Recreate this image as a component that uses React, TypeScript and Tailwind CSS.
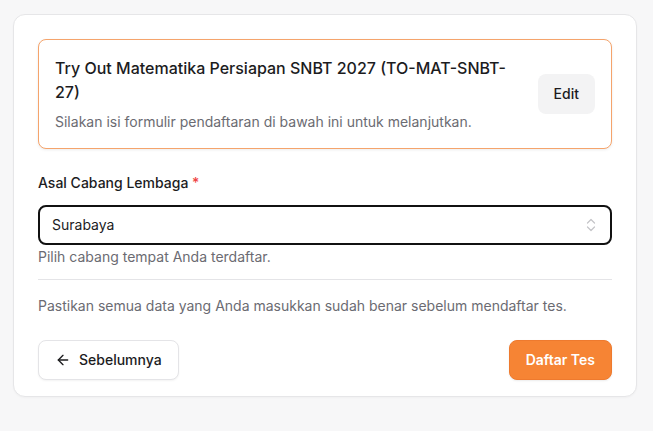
import React from "react";

export default function App() {
  return (
    <div
      className="min-h-screen w-full bg-[#f7f7f8] pt-[14px] pl-[13px]"
      style={{ fontFamily: "Inter, 'Noto Sans', sans-serif" }}
    >
      <div className="w-[624px] rounded-xl border border-[#e6e6e8] bg-white px-6 pt-6 pb-[16px] shadow-[0_1px_2px_rgba(0,0,0,0.03)]">
        <div className="flex items-center gap-4 rounded-lg border border-[#f5a46c] bg-white p-4 shadow-[0_1px_3px_rgba(0,0,0,0.08)]">
          <div className="flex-1">
            <div className="text-base leading-6 font-medium text-[#1c1c1e]">
              Try Out Matematika Persiapan SNBT 2027 (TO-MAT-SNBT-27)
            </div>
            <div className="mt-2 text-sm leading-5 text-[#6b6b72]">
              Silakan isi formulir pendaftaran di bawah ini untuk melanjutkan.
            </div>
          </div>
          <button className="h-10 rounded-lg bg-[#f3f3f4] px-4 text-sm font-medium text-[#1c1c1e]">
            Edit
          </button>
        </div>

        <div className="mt-6 text-sm leading-5 font-medium text-[#1c1c1e]">
          Asal Cabang Lembaga <span className="text-[#ef4444]">*</span>
        </div>
        <div className="mt-3 flex h-10 items-center justify-between rounded-lg border-2 border-[#111111] pl-3 pr-3">
          <span className="text-sm text-[#1c1c1e]">Surabaya</span>
          <svg width="14" height="16" viewBox="0 0 14 16" fill="none" stroke="#c4c4c8" strokeWidth="1.2" strokeLinecap="round" strokeLinejoin="round">
            <path d="M3.5 6 L7 2.5 L10.5 6" />
            <path d="M3.5 10 L7 13.5 L10.5 10" />
          </svg>
        </div>
        <div className="mt-0.5 text-sm leading-5 text-[#6b6b72]">
          Pilih cabang tempat Anda terdaftar.
        </div>
        <div className="mt-3 h-px bg-[#e4e4e7]" />
        <div className="mt-4 text-sm leading-5 text-[#6b6b72]">
          Pastikan semua data yang Anda masukkan sudah benar sebelum mendaftar tes.
        </div>

        <div className="mt-6 flex items-center justify-between">
          <button className="flex h-10 items-center gap-2 rounded-lg border border-[#e4e4e7] bg-white px-4 text-sm font-medium text-[#1c1c1e] shadow-[0_1px_2px_rgba(0,0,0,0.05)]">
            <svg width="16" height="16" viewBox="0 0 24 24" fill="none" stroke="currentColor" strokeWidth="2" strokeLinecap="round" strokeLinejoin="round">
              <path d="m12 19-7-7 7-7" />
              <path d="M19 12H5" />
            </svg>
            Sebelumnya
          </button>
          <button className="h-10 rounded-lg border border-[#ee7a2e] bg-[#f68434] px-4 text-sm font-semibold text-white shadow-[0_1px_2px_rgba(0,0,0,0.08)]">
            Daftar Tes
          </button>
        </div>
      </div>
    </div>
  );
}
